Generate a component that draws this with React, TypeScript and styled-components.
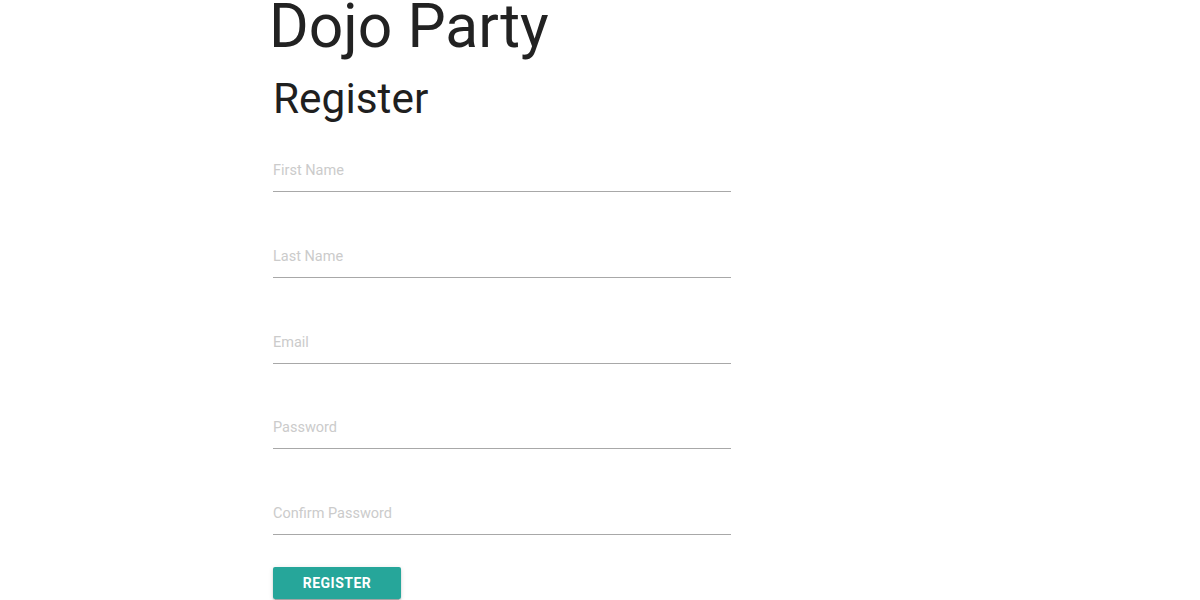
import React from "react";
import styled, { createGlobalStyle } from "styled-components";

const Global = createGlobalStyle`
  html, body { margin: 0; padding: 0; background: #fff; }
  body { font-family: Roboto, "Liberation Sans", sans-serif; color: rgba(0,0,0,0.87); }
  * { box-sizing: border-box; }
`;

const Page = styled.div`
  width: 1200px;
  height: 600px;
  overflow: hidden;
  padding-left: 273px;
`;

const Title = styled.h1`
  margin: 0;
  margin-left: -4px;
  margin-top: -5px;
  font-size: 60.6px;
  font-weight: 400;
  line-height: 64px;
  color: #222;
`;

const Subtitle = styled.h3`
  margin: 17px 0 0 0;
  font-size: 42.4px;
  font-weight: 400;
  line-height: 46px;
  color: #1f1f1f;
`;

const Form = styled.form`
  width: 458px;
  margin-top: 29px;
  display: flex;
  flex-direction: column;
`;

const Field = styled.div<{ $last?: boolean }>`
  margin-bottom: ${(p) => (p.$last ? "32px" : "44.75px")};
`;

const Input = styled.input`
  display: block;
  width: 100%;
  height: 41px;
  padding: 0;
  border: none;
  border-bottom: 1px solid #a8a8a8;
  outline: none;
  background: transparent;
  font-family: Roboto, "Liberation Sans", sans-serif;
  font-size: 14.5px;
  line-height: 42px;
  color: #333;
  &::placeholder { color: #cbcbcb; }
`;

const Button = styled.button`
  align-self: flex-start;
  width: 128px;
  height: 32px;
  border: none;
  border-radius: 2px;
  background: #26a69a;
  color: #fff;
  font-family: Roboto, "Liberation Sans", sans-serif;
  font-size: 14px;
  font-weight: 700;
  letter-spacing: 0.5px;
  text-transform: uppercase;
  padding: 0;
  box-shadow: 0 2px 2px 0 rgba(0,0,0,0.14), 0 1px 5px 0 rgba(0,0,0,0.12), 0 3px 1px -2px rgba(0,0,0,0.2);
  cursor: pointer;
`;

const fields = [
  { name: "firstName", label: "First Name", type: "text" },
  { name: "lastName", label: "Last Name", type: "text" },
  { name: "email", label: "Email", type: "email" },
  { name: "password", label: "Password", type: "password" },
  { name: "confirm", label: "Confirm Password", type: "password" },
];

export default function App() {
  return (
    <>
      <Global />
      <Page>
        <Title>Dojo Party</Title>
        <Subtitle>Register</Subtitle>
        <Form onSubmit={(e) => e.preventDefault()}>
          {fields.map((f, i) => (
            <Field key={f.name} $last={i === fields.length - 1}>
              <Input name={f.name} type={f.type} placeholder={f.label} />
            </Field>
          ))}
          <Button type="submit">Register</Button>
        </Form>
      </Page>
    </>
  );
}
